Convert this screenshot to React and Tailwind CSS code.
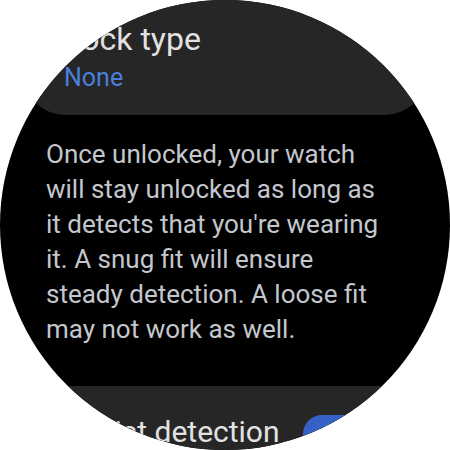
import React from 'react'

export default function App() {
  return (
    <div className="w-[450px] h-[450px] bg-white overflow-hidden" style={{ fontFamily: 'Roboto, "Liberation Sans", sans-serif' }}>
      <div className="w-[450px] h-[450px] rounded-full bg-black overflow-hidden flex flex-col">
        {/* Lock type card */}
        <div className="mx-[22px] h-[115px] shrink-0 bg-[#262626] rounded-b-[44px] pl-[42px] pt-[20px]">
          <div className="text-[32px] leading-[38px] text-[#e2e2e2]">Lock type</div>
          <div className="mt-[4px] text-[25px] leading-[32px] text-[#4a80dc]">None</div>
        </div>

        {/* Description */}
        <p className="mt-[22px] pl-[46px] text-[26px] leading-[35px] text-[#c3c7cd] whitespace-nowrap">
          Once unlocked, your watch<br />
          will stay unlocked as long as<br />
          it detects that you're wearing<br />
          it. A snug fit will ensure<br />
          steady detection. A loose fit<br />
          may not work as well.
        </p>

        {/* Wrist detection card */}
        <div className="mt-[39px] flex-1 bg-[#262626] flex items-start pl-[78px] pr-[75px] pt-[27px]">
          <span className="text-[30px] leading-[38px] text-[#e2e2e2] whitespace-nowrap">Wrist detection</span>
          <div className="ml-auto mt-[2px] w-[72px] h-[38px] rounded-full bg-[#3562c4] shrink-0" />
        </div>
      </div>
    </div>
  )
}
